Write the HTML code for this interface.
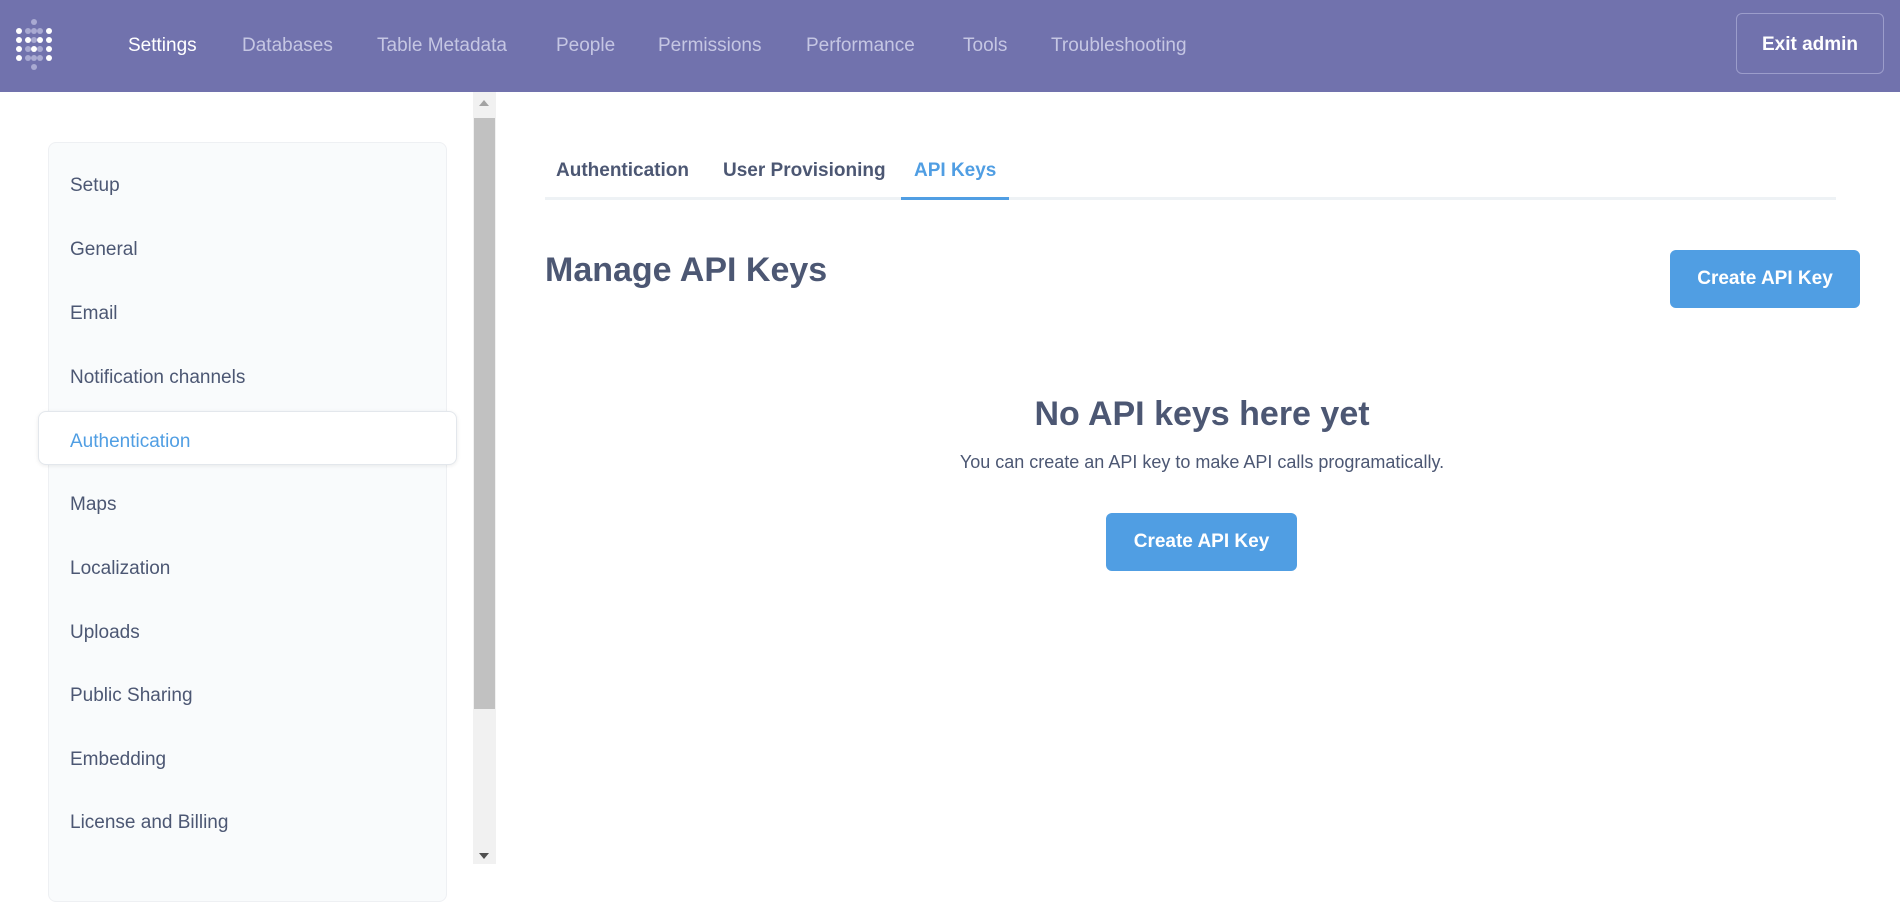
<!DOCTYPE html>
<html><head><meta charset="utf-8"><style>
*{box-sizing:border-box;margin:0;padding:0}
body{width:1900px;height:864px;overflow:hidden;background:#fff;font-family:"Liberation Sans",sans-serif;color:#4c5773;position:relative}
.nav{position:absolute;left:0;top:0;width:1900px;height:92px;background:#7172ad}
.nav a{position:absolute;top:35px;font-size:19px;color:#c5c6e3}
.nav a.on{color:#fff}
.exit{position:absolute;left:1736px;top:13px;width:148px;height:61px;border:1px solid #9c9dcb;border-radius:6px;color:#fff;font-weight:bold;font-size:19px;text-align:center;line-height:61px}
.side{position:absolute;left:48px;top:142px;width:399px;height:760px;background:#f9fbfc;border:1px solid #eef0f3;border-radius:8px}
.si{position:absolute;left:70px;font-size:19px;color:#4c5773;line-height:24px}
.act{position:absolute;left:38px;top:411px;width:419px;height:54px;background:#fff;border:1px solid #e3e7ec;border-radius:8px;box-shadow:0 1px 4px rgba(0,0,0,.08)}
.sb{position:absolute;left:473px;top:92px;width:23px;height:772px;background:#f1f1f1}
.th{position:absolute;left:474px;top:118px;width:21px;height:591px;background:#c1c1c1}
.tab{position:absolute;top:160px;font-size:19px;font-weight:bold;color:#4c5773}
.btn{position:absolute;background:#509ee3;color:#fff;font-weight:bold;font-size:19px;border-radius:6px;text-align:center}
</style></head><body>
<div class="nav">
<svg style="position:absolute;left:15px;top:18px" width="42" height="52" viewBox="0 0 42 52">
<g fill="#fff">
<circle cx="4" cy="13" r="3"/><circle cx="34" cy="13" r="3"/>
<circle cx="4" cy="22" r="3"/><circle cx="13" cy="22" r="3"/><circle cx="25" cy="22" r="3"/><circle cx="34" cy="22" r="3"/>
<circle cx="4" cy="31" r="3"/><circle cx="19" cy="31" r="3"/><circle cx="34" cy="31" r="3"/>
<circle cx="4" cy="40" r="3"/><circle cx="34" cy="40" r="3"/></g>
<g fill="#a9aad2">
<circle cx="19" cy="4" r="3"/><circle cx="13" cy="13" r="3"/><circle cx="19" cy="13" r="3"/><circle cx="25" cy="13" r="3"/>
<circle cx="19" cy="22" r="3"/><circle cx="13" cy="31" r="3"/><circle cx="25" cy="31" r="3"/>
<circle cx="13" cy="40" r="3"/><circle cx="19" cy="40" r="3"/><circle cx="25" cy="40" r="3"/><circle cx="19" cy="49" r="3"/></g>
</svg>
<a class="on" style="left:128px">Settings</a>
<a style="left:242px">Databases</a>
<a style="left:377px">Table Metadata</a>
<a style="left:556px">People</a>
<a style="left:658px">Permissions</a>
<a style="left:806px">Performance</a>
<a style="left:963px">Tools</a>
<a style="left:1051px">Troubleshooting</a>
<div class="exit">Exit admin</div>
</div>
<div class="side"></div>
<div class="act"></div>
<div class="si" style="top:174px">Setup</div>
<div class="si" style="top:238px">General</div>
<div class="si" style="top:302px">Email</div>
<div class="si" style="top:366px">Notification channels</div>
<div class="si" style="top:430px;color:#509ee3">Authentication</div>
<div class="si" style="top:493px">Maps</div>
<div class="si" style="top:557px">Localization</div>
<div class="si" style="top:621px">Uploads</div>
<div class="si" style="top:684px">Public Sharing</div>
<div class="si" style="top:748px">Embedding</div>
<div class="si" style="top:811px">License and Billing</div>
<div class="sb"></div><div class="th"></div>
<div style="position:absolute;left:479px;top:100px;border:5px solid transparent;border-bottom:6px solid #a3a3a3;border-top:0"></div>
<div style="position:absolute;left:479px;top:853px;border:5px solid transparent;border-top:6px solid #505050;border-bottom:0"></div>
<div class="tab" style="left:556px">Authentication</div>
<div class="tab" style="left:723px">User Provisioning</div>
<div class="tab" style="left:914px;color:#509ee3">API Keys</div>
<div style="position:absolute;left:545px;top:197px;width:1291px;height:3px;background:#eef2f5"></div>
<div style="position:absolute;left:901px;top:197px;width:108px;height:3px;background:#509ee3"></div>
<div style="position:absolute;left:545px;top:251px;font-size:34px;font-weight:bold">Manage API Keys</div>
<div class="btn" style="left:1670px;top:250px;width:190px;height:58px;line-height:58px">Create API Key</div>
<div style="position:absolute;left:0;width:2404px;top:395px;text-align:center;font-size:34px;font-weight:bold">No API keys here yet</div>
<div style="position:absolute;left:0;width:2404px;top:452px;text-align:center;font-size:18px">You can create an API key to make API calls programatically.</div>
<div class="btn" style="left:1106px;top:513px;width:191px;height:58px;line-height:58px">Create API Key</div>
</body></html>
